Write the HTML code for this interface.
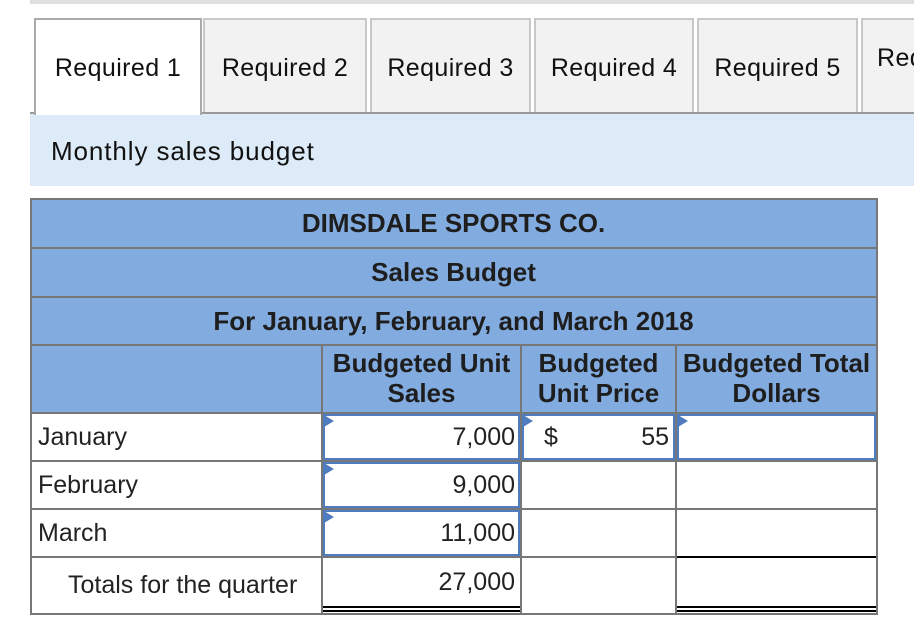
<!DOCTYPE html>
<html><head><style>
*{margin:0;padding:0;box-sizing:border-box}
body{width:914px;height:630px;background:#fff;position:relative;overflow:hidden;font-family:"Liberation Sans",Arial,sans-serif;color:#222}
.a{position:absolute}
.tab{position:absolute;top:18px;height:95px;border:2px solid #c8c8c8;border-bottom:none;background:#f2f2f2;font-size:25px;letter-spacing:0.4px;line-height:97px;text-align:center;color:#111;white-space:nowrap;overflow:hidden}
.h{position:absolute;background:#82abdf;font-weight:bold;font-size:26px;text-align:center;color:#1e1e1e;white-space:nowrap}
.l{position:absolute;background:#777}
.c{position:absolute;font-size:25px;white-space:nowrap}
.inp{position:absolute;border:2px solid #4f7bbf;background:#fff}
.tri{position:absolute;width:0;height:0;border-top:6px solid transparent;border-bottom:6px solid transparent;border-left:10px solid #4f7bbf}
</style></head><body>
<div class="a" style="left:30px;top:0;width:884px;height:4px;background:#e0e0e0"></div>
<div class="tab" style="left:34px;width:168px;background:#fff;border-color:#aaa;height:97px;z-index:2">Required 1</div>
<div class="tab" style="left:203px;width:164px">Required 2</div>
<div class="tab" style="left:370px;width:161px">Required 3</div>
<div class="tab" style="left:534px;width:160px">Required 4</div>
<div class="tab" style="left:697px;width:161px">Required 5</div>
<div class="tab" style="left:861px;width:60px;line-height:24px;padding-top:26px;text-align:left;padding-left:14px">Req</div>
<div class="a" style="left:30px;top:112px;width:884px;height:2px;background:#999"></div>
<div class="a" style="left:30px;top:114px;width:884px;height:72px;background:#ddeaf8;font-size:26px;letter-spacing:0.9px;line-height:74px;padding-left:21px;color:#111">Monthly sales budget</div>

<div class="h" style="left:30px;top:198px;width:847px;height:216px"></div>
<div class="h" style="left:30px;top:198px;width:847px;height:50px;line-height:50px;background:none">DIMSDALE SPORTS CO.</div>
<div class="h" style="left:30px;top:248px;width:847px;height:49px;line-height:49px;background:none">Sales Budget</div>
<div class="h" style="left:30px;top:297px;width:847px;height:48px;line-height:48px;background:none">For January, February, and March 2018</div>
<div class="h" style="left:322px;top:348px;width:199px;line-height:30px;background:none">Budgeted Unit<br>Sales</div>
<div class="h" style="left:521px;top:348px;width:155px;line-height:30px;background:none">Budgeted<br>Unit Price</div>
<div class="h" style="left:676px;top:348px;width:201px;line-height:30px;background:none">Budgeted Total<br>Dollars</div>

<div class="l" style="left:30px;top:198px;width:2px;height:416px"></div>
<div class="l" style="left:876px;top:198px;width:2px;height:416px"></div>
<div class="l" style="left:30px;top:198px;width:848px;height:2px"></div>
<div class="l" style="left:30px;top:247px;width:848px;height:2px"></div>
<div class="l" style="left:30px;top:296px;width:848px;height:2px"></div>
<div class="l" style="left:30px;top:344px;width:848px;height:2px"></div>
<div class="l" style="left:30px;top:412px;width:848px;height:2px"></div>
<div class="l" style="left:30px;top:460px;width:848px;height:2px"></div>
<div class="l" style="left:30px;top:508px;width:848px;height:2px"></div>
<div class="l" style="left:30px;top:556px;width:848px;height:2px"></div>
<div class="l" style="left:30px;top:613px;width:848px;height:2px"></div>
<div class="l" style="left:321px;top:344px;width:2px;height:270px"></div>
<div class="l" style="left:520px;top:344px;width:2px;height:270px"></div>
<div class="l" style="left:675px;top:344px;width:2px;height:270px"></div>
<div class="a" style="left:677px;top:556px;width:199px;height:2px;background:#000"></div>
<div class="a" style="left:323px;top:606px;width:197px;height:2px;background:#000"></div>
<div class="a" style="left:323px;top:610px;width:197px;height:2px;background:#000"></div>
<div class="a" style="left:677px;top:606px;width:199px;height:2px;background:#000"></div>
<div class="a" style="left:677px;top:610px;width:199px;height:2px;background:#000"></div>

<div class="inp" style="left:323px;top:414px;width:197px;height:46px"></div>
<div class="inp" style="left:522px;top:414px;width:153px;height:46px"></div>
<div class="inp" style="left:677px;top:414px;width:199px;height:46px"></div>
<div class="inp" style="left:323px;top:462px;width:197px;height:46px"></div>
<div class="inp" style="left:323px;top:510px;width:197px;height:46px"></div>
<div class="tri" style="left:324px;top:415px"></div>
<div class="tri" style="left:523px;top:415px"></div>
<div class="tri" style="left:678px;top:415px"></div>
<div class="tri" style="left:324px;top:463px"></div>
<div class="tri" style="left:324px;top:511px"></div>

<div class="c" style="left:38px;top:423px">January</div>
<div class="c" style="left:38px;top:471px">February</div>
<div class="c" style="left:38px;top:519px">March</div>
<div class="c" style="left:68px;top:571px">Totals for the quarter</div>
<div class="c" style="left:323px;top:423px;width:192px;text-align:right">7,000</div>
<div class="c" style="left:323px;top:471px;width:192px;text-align:right">9,000</div>
<div class="c" style="left:323px;top:519px;width:192px;text-align:right">11,000</div>
<div class="c" style="left:323px;top:568px;width:192px;text-align:right">27,000</div>
<div class="c" style="left:544px;top:423px">$</div>
<div class="c" style="left:522px;top:423px;width:147px;text-align:right">55</div>
</body></html>
